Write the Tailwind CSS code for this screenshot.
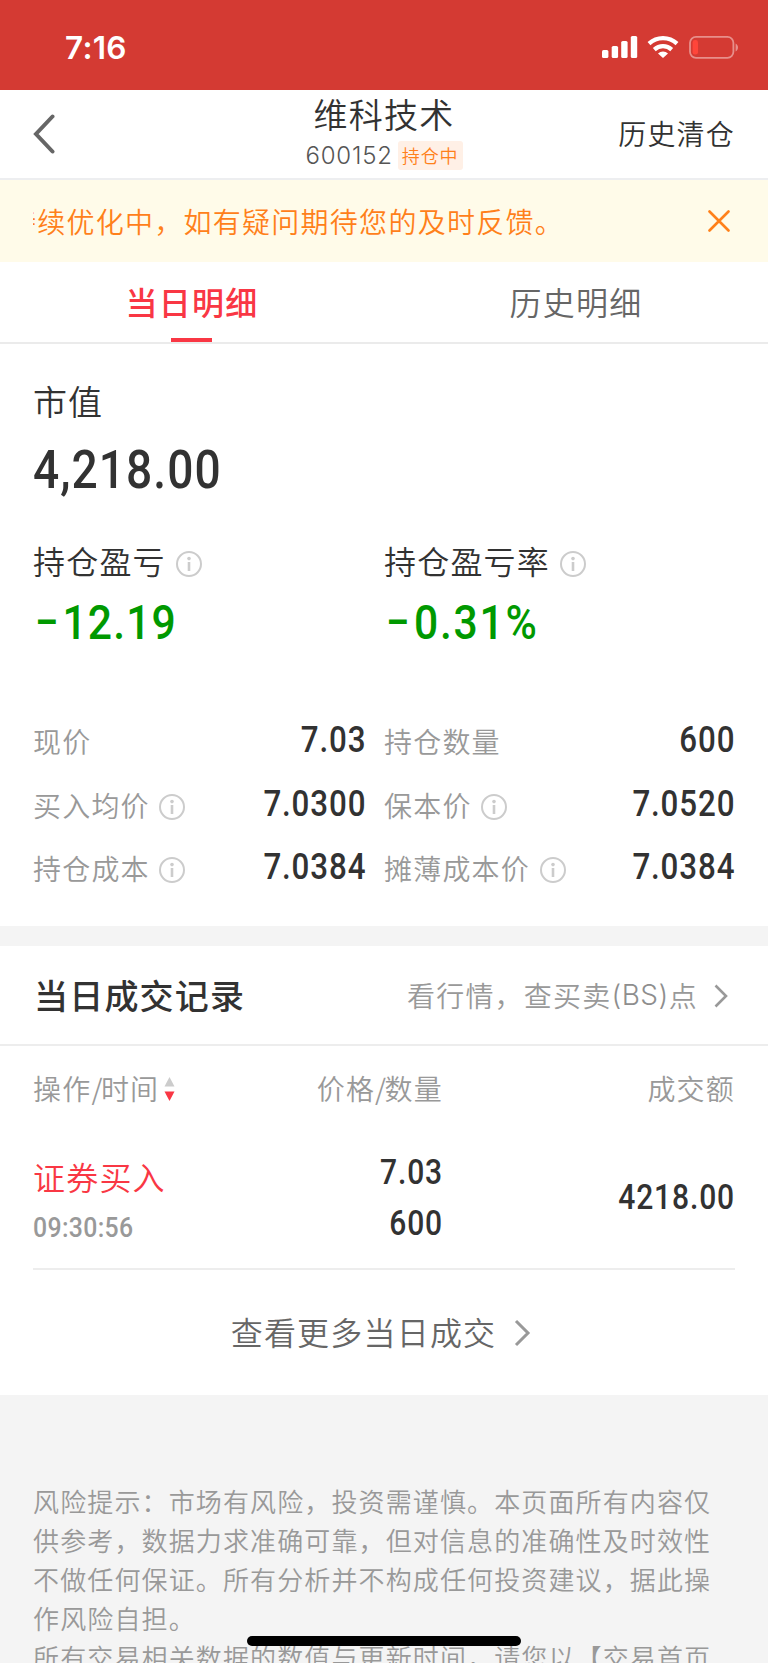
<!DOCTYPE html>
<html lang="zh-CN">
<head>
<meta charset="utf-8">
<title>维科技术</title>
<script src="https://cdn.jsdelivr.net/npm/@tailwindcss/browser@4"></script>
</head>
<body class="bg-[#f4f4f4]">
<svg class="hidden">
  <symbol id="info" viewBox="0 0 26 26"><circle cx="13" cy="13" r="12" fill="none" stroke="#ccc" stroke-width="2"/><circle cx="13" cy="7.6" r="1.8" fill="#ccc"/><path d="M13 11v9" stroke="#ccc" stroke-width="2.6"/></symbol>
</svg>
<div class="relative w-[768px] h-[1663px] overflow-hidden font-['Noto_Sans_CJK_SC',sans-serif] font-[350] text-[#323232] whitespace-nowrap">
  <div class="h-[90px] bg-[#d43a33] flex justify-between pl-[65px] pr-[29px]">
    <div class="font-['Inter'] font-semibold text-white text-[31.500px] leading-[95px] tracking-[0.3px]">7:16</div>
    <svg class="mt-[35px]" width="137" height="24" viewBox="0 0 137 24" fill="none">
      <g fill="#fff"><rect x="0" y="15" width="6.4" height="8" rx="1.6"/><rect x="9.7" y="11" width="6.4" height="12" rx="1.6"/><rect x="19.2" y="6" width="6.4" height="17" rx="1.6"/><rect x="28.8" y="1" width="6.4" height="22" rx="1.6"/>
      <path d="M61 23l-5-4.600a7.400 7.400 0 0 1 10 0z"/></g>
      <g stroke="#fff" stroke-width="4.200"><path d="M47 8.600a20.500 20.500 0 0 1 28 0"/><path d="M52.300 14.600a12.800 12.800 0 0 1 17.400 0"/></g>
      <rect x="88" y="1.8" width="43.4" height="21" rx="6" stroke="#e78f8b" stroke-width="1.8"/>
      <rect x="90.6" y="5" width="5.4" height="14.6" rx="2.4" fill="#ff453a"/>
      <path d="M133.600 8.500c3.200 1.600 3.200 6.400 0 8z" fill="#e78f8b"/>
    </svg>
  </div>
  <div class="h-[90px] bg-white border-b-2 border-[#edeef0] grid grid-cols-3">
    <svg class="mt-[24px] ml-[32px]" width="24" height="40" viewBox="0 0 24 40" fill="none" stroke="#666" stroke-width="4"><path d="M20.500 2.500L4 20l16.500 17.500" stroke-linecap="round"/></svg>
    <div class="flex flex-col items-center">
      <div class="text-[34px] leading-[46px] tracking-[1.2px] mt-px">维科技术</div>
      <div class="flex items-center gap-[5px] h-[36px]">
        <span class="font-['Inter'] font-light text-[24px] leading-[30px] pt-[2px] tracking-[0.8px] text-[#555]">600152</span>
        <span class="h-[29px] px-1 rounded-[3px] bg-[#fff0e6] text-[#ff801a] text-[18px] leading-[28px] tracking-[0.9px]">持仓中</span>
      </div>
    </div>
    <div class="text-right pr-[33px] text-[28px] tracking-[1.2px] leading-[86px]">历史清仓</div>
  </div>
  <div class="h-[82px] bg-[#fffbe9] flex justify-between items-center pl-[33px] pr-[38px] text-[#ff801a]">
    <div class="w-[560px] overflow-hidden flex"><div class="-ml-[25px] text-[28px] tracking-[1.26px] leading-[80px]">持续优化中，如有疑问期待您的及时反馈。</div></div>
    <svg width="22" height="22" viewBox="0 0 22 22" stroke="#ff801a" stroke-width="2.6" stroke-linecap="round"><path d="M1.500 1.500l19 19m0-19l-19 19"/></svg>
  </div>
  <div class="h-[82px] bg-white border-b-2 border-[#ebebeb] grid grid-cols-2 text-[32px] tracking-[1.2px] text-center">
    <div class="flex flex-col items-center text-[#f93744] font-medium"><div class="h-[76px] leading-[78px]">当日明细</div><div class="w-[41px] h-1 bg-[#f93744] mr-px"></div></div>
    <div class="leading-[78px] text-[#666]">历史明细</div>
  </div>
  <div class="h-[582px] bg-white px-[33px] pt-[32px]">
    <div class="h-[50px] text-[34px] leading-[50px] tracking-[1px]">市值</div>
    <div class="h-[86px] font-['Roboto'] font-medium text-[53px] leading-[89px] tracking-[1.2px] origin-left scale-x-[0.87]">4,218.00</div>
    <div class="grid grid-cols-[351px_351px] h-[210px] pt-[23px]">
      <div><div class="flex items-center h-[50px] gap-[9px] text-[32px] tracking-[1.2px] leading-[48px]">持仓盈亏<svg class="w-[26px] h-[26px] mt-[7px] ml-px"><use href="#info"/></svg></div>
        <div class="h-[66px] mt-[5px] pl-[2px] font-['Roboto'] font-medium text-[49px] leading-[66px] tracking-[1.3px] text-[#090] origin-left scale-x-[0.87]"><span class="mr-[3px]">−</span>12.19</div></div>
      <div><div class="flex items-center h-[50px] gap-[9px] text-[32px] tracking-[1.2px] leading-[48px]">持仓盈亏率<svg class="w-[26px] h-[26px] mt-[7px] ml-px"><use href="#info"/></svg></div>
        <div class="h-[66px] mt-[5px] pl-[2px] font-['Roboto'] font-medium text-[49px] leading-[66px] tracking-[2px] text-[#090] origin-left scale-x-[0.87]"><span class="mr-[3px]">−</span>0.31%</div></div>
    </div>
    <div class="grid grid-cols-[333px_351px] gap-x-[18px] auto-rows-[63.7px] text-[28px] tracking-[1.2px] leading-[60px] text-[#999] -mt-[11px]">
      <div class="flex justify-between"><span>现价</span><b class="font-['Roboto'] font-medium text-[36px] tracking-[1px] text-[#323232] origin-right scale-x-[0.87] leading-[59px]">7.03</b></div>
      <div class="flex justify-between"><span>持仓数量</span><b class="font-['Roboto'] font-medium text-[36px] tracking-[1px] text-[#323232] origin-right scale-x-[0.87] leading-[59px]">600</b></div>
      <div class="flex justify-between"><span class="flex gap-[9px]">买入均价<svg class="w-[26px] h-[26px] mt-[19px]"><use href="#info"/></svg></span><b class="font-['Roboto'] font-medium text-[36px] tracking-[1px] text-[#323232] origin-right scale-x-[0.87] leading-[59px]">7.0300</b></div>
      <div class="flex justify-between"><span class="flex gap-[9px]">保本价<svg class="w-[26px] h-[26px] mt-[19px]"><use href="#info"/></svg></span><b class="font-['Roboto'] font-medium text-[36px] tracking-[1px] text-[#323232] origin-right scale-x-[0.87] leading-[59px]">7.0520</b></div>
      <div class="flex justify-between"><span class="flex gap-[9px]">持仓成本<svg class="w-[26px] h-[26px] mt-[19px]"><use href="#info"/></svg></span><b class="font-['Roboto'] font-medium text-[36px] tracking-[1px] text-[#323232] origin-right scale-x-[0.87] leading-[59px]">7.0384</b></div>
      <div class="flex justify-between"><span class="flex gap-[10px]">摊薄成本价<svg class="w-[26px] h-[26px] mt-[19px]"><use href="#info"/></svg></span><b class="font-['Roboto'] font-medium text-[36px] tracking-[1px] text-[#323232] origin-right scale-x-[0.87] leading-[59px]">7.0384</b></div>
    </div>
  </div>
  <div class="h-5"></div>
  <div class="h-[100px] bg-white border-b-2 border-[#ededed] flex justify-between items-center pl-[34px] pr-[40px]">
    <div class="text-[34px] font-medium tracking-[1.2px] leading-[96px]">当日成交记录</div>
    <div class="flex items-center text-[28px] tracking-[1.2px] text-[#999] leading-[96px]">看行情，查买卖<span class="font-['Inter'] font-light text-[28px] tracking-[0.5px] leading-[98px] text-[#8e8e8e]">(BS)</span>点<svg class="ml-[16px] mt-[2px]" width="14" height="24" viewBox="0 0 14 24" fill="none" stroke="#999" stroke-width="2.6"><path d="M1.500 1.500L12 12 1.500 22.500"/></svg></div>
  </div>
  <div class="h-[349px] bg-white px-[33px]">
    <div class="grid grid-cols-[204px_206px_292px] h-[88px] text-[28px] tracking-[1.2px] leading-[85px] text-[#999]">
      <div class="flex">操作<span class="tracking-[-1.500px]">/</span>时间<svg class="ml-[5px] mt-[31px]" width="11" height="24" viewBox="0 0 11 24"><path d="M5.500 0L10.500 9.500H.5z" fill="#ccc"/><path d="M.5 14.500h10L5.500 24z" fill="#f93744"/></svg></div>
      <div class="text-right">价格<span class="tracking-[-1.500px]">/</span>数量</div>
      <div class="text-right">成交额</div>
    </div>
    <div class="grid grid-cols-[204px_206px_292px] h-[136px] border-b-2 border-[#ededed]">
      <div><div class="mt-[18px] h-[50px] text-[32px] tracking-[1.2px] leading-[48px] text-[#f93744]">证券买入</div><div class="font-['Roboto'] font-medium text-[28.500px] tracking-[0.4px] leading-[52px] text-[#999] origin-left scale-x-[0.87]">09:30:56</div></div>
      <div class="text-right font-['Roboto'] font-medium text-[34.500px] tracking-[1px] leading-[51px] pt-[13px] origin-right scale-x-[0.87]"><div>7.03</div><div>600</div></div>
      <div class="text-right font-['Roboto'] font-medium text-[34.500px] tracking-[1px] leading-[127px] origin-right scale-x-[0.87]">4218.00</div>
    </div>
    <div class="flex justify-center items-center h-[125px] pb-[3px] pr-[6px] text-[32px] tracking-[1.2px] text-[#666]">查看更多当日成交<svg class="ml-[18px] mt-[3px]" width="17" height="28" viewBox="0 0 17 28" fill="none" stroke="#999" stroke-width="3"><path d="M2 2l12 12L2 26"/></svg></div>
  </div>
  <div class="px-[33px] pt-[86px] text-[26px] tracking-[1.13px] leading-[39px] text-[#999]">
    <p>风险提示：市场有风险，投资需谨慎。本页面所有内容仅</p>
    <p>供参考，数据力求准确可靠，但对信息的准确性及时效性</p>
    <p>不做任何保证。所有分析并不构成任何投资建议，据此操</p>
    <p>作风险自担。</p>
    <p>所有交易相关数据的数值与更新时间，请您以【交易首页</p>
  </div>
  <div class="absolute left-[247px] top-[1636px] w-[274px] h-[10px] rounded-full bg-black"></div>
</div>
</body>
</html>
